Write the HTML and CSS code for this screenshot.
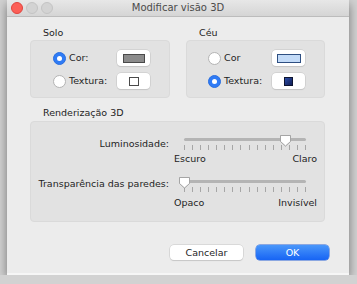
FILE: index.html
```html
<!DOCTYPE HTML>
<html>
<head>
<meta charset="utf-8">
<title>Modificar visão 3D</title>
<link rel="stylesheet" href="styles.css">
</head>
<body>
<div class="window">
  <div class="titlebar">
    <div class="lights"><span class="light close"></span><span class="light"></span><span class="light"></span></div>
    <div class="title">Modificar visão 3D</div>
    <div></div>
  </div>
  <div class="content">
    <div class="groups">
      <div class="group">
        <div class="group_tit">Solo</div>
        <div class="box choice">
          <label class="opt"><span class="radio on"></span>Cor:</label>
          <span class="swatch"><span class="chip chip_gray"></span></span>
          <label class="opt"><span class="radio"></span>Textura:</label>
          <span class="swatch"><span class="chip chip_white"></span></span>
        </div>
      </div>
      <div class="group">
        <div class="group_tit">Céu</div>
        <div class="box choice sky">
          <label class="opt"><span class="radio"></span>Cor</label>
          <span class="swatch"><span class="chip chip_blue"></span></span>
          <label class="opt"><span class="radio on"></span>Textura:</label>
          <span class="swatch"><span class="chip chip_navy"></span></span>
        </div>
      </div>
    </div>

    <div class="group render">
      <div class="group_tit">Renderização 3D</div>
      <div class="box sliders">
        <div class="s_label s_first">Luminosidade:</div>
        <div class="s_col">
          <div class="slider">
            <div class="track"></div>
            <div class="ticks"><i></i><i></i><i></i><i></i><i></i><i></i><i></i><i></i><i></i><i></i><i></i><i></i><i></i><i></i><i></i><i></i></div>
            <svg class="thumb" style="left:95px" width="13" height="13" viewBox="0 0 13 13"><path d="M1.5 1.5 H11.5 V7.5 L6.5 12 L1.5 7.5 Z" fill="#fff" stroke="#a5a5a5"/></svg>
          </div>
          <div class="ends"><span>Escuro</span><span>Claro</span></div>
        </div>
        <div class="s_label">Transparência das paredes:</div>
        <div class="s_col s_second">
          <div class="slider">
            <div class="track"></div>
            <div class="ticks"><i></i><i></i><i></i><i></i><i></i><i></i><i></i><i></i><i></i><i></i><i></i><i></i><i></i><i></i><i></i><i></i></div>
            <svg class="thumb" style="left:-6px" width="13" height="13" viewBox="0 0 13 13"><path d="M1.5 1.5 H11.5 V7.5 L6.5 12 L1.5 7.5 Z" fill="#fff" stroke="#a5a5a5"/></svg>
          </div>
          <div class="ends"><span>Opaco</span><span>Invisível</span></div>
        </div>
      </div>
    </div>

    <div class="buttons">
      <button class="btn">Cancelar</button>
      <button class="btn btn_ok">OK</button>
    </div>
  </div>
</div>
</body>
</html>
```

FILE: styles.css
```css
* { margin:0; padding:0; box-sizing:border-box;}
body{ background:#d2d2d2; font:normal 9.5px/12px "DejaVu Sans", sans-serif; color:#1e1e1e; overflow:hidden;}
.window{ width:342px; height:275px; margin-left:7px; background:#ececec; box-shadow:0 4px 10px rgba(0,0,0,.45); display:flex; flex-direction:column;}

.titlebar{ height:17px; display:grid; grid-template-columns:1fr auto 1fr; align-items:center; background:linear-gradient(#e7e7e7,#d5d5d5); border-bottom:1px solid #bcbcbc;}
.lights{ display:flex; gap:3px; padding-left:4px;}
.light{ width:12px; height:12px; border-radius:50%; background:#d3d3d3; border:1px solid #c4c4c4;}
.light.close{ background:#fc5f57; border-color:#e0443e;}
.title{ font-size:10px; color:#4b4b4b;}

.content{ flex:1; padding:10px 24px 0 23px; border-bottom:2px solid #f6f6f6;}
.groups{ display:flex; gap:16px;}
.group .group_tit{ padding-left:13px; margin-bottom:1px;}
.box{ background:#e2e2e2; border:1px solid #dadada; border-radius:4px;}

.choice{ width:140px; height:58px; display:grid; grid-template-columns:64px 33px; grid-auto-rows:16px; row-gap:7px; padding:9px 0 0 22px; align-items:center;}
.group + .group .choice{ width:139px; padding-left:21px;}
.opt{ display:flex; align-items:center; gap:3px;}
.radio{ width:13px; height:13px; border-radius:50%; background:#fff; border:1px solid #b4b4b4; display:flex; align-items:center; justify-content:center;}
.radio.on{ background:#2f7bf5; border-color:#2a6fe0;}
.radio.on::after{ content:""; width:5px; height:5px; border-radius:50%; background:#fff;}
.swatch{ height:16px; background:#fff; border-radius:4px; box-shadow:0 0 0 .5px #c3c3c3, 0 1px 1px rgba(0,0,0,.12); display:flex; align-items:center; justify-content:center;}
.chip{ display:block; height:9px; border:1px solid #4a4a4a;}
.chip_gray{ width:22px; background:#8b8b8b;}
.chip_white{ width:10px; background:#fff;}
.chip_blue{ width:24px; background:#c3dbf8; border-color:#2e4f82;}
.chip_navy{ width:9px; background:linear-gradient(135deg,#2d4ea8,#101d55); border-color:#0d1430;}

.render{ margin-top:9px;}
.render .group_tit{ margin-bottom:2px;}
.sliders{ height:101px; display:grid; grid-template-columns:138px 143px; column-gap:5px; row-gap:11px; padding-top:12px; align-content:start;}
.s_label{ text-align:right; margin-top:2px;}
.s_first{ margin-top:4px;}
.slider{ position:relative; height:19px; margin:0 11px 0 10px;}
.track{ position:absolute; left:0; right:0; top:4px; height:3px; border-radius:2px; background:#b4b4b4;}
.ticks{ position:absolute; left:0; right:0; top:11px; height:5px; display:flex; justify-content:space-between;}
.ticks i{ width:1px; background:#a6a6a6;}
.thumb{ position:absolute; top:0; filter:drop-shadow(0 .5px .5px rgba(0,0,0,.2));}
.ends{ display:flex; justify-content:space-between;}
.s_second .ends{ margin-top:2px;}

.buttons{ display:flex; justify-content:flex-end; gap:13px; margin-top:23px; padding-right:-4px; margin-right:-4px;}
.btn{ width:73px; height:15px; border:none; border-radius:4px; background:#fff; font:normal 9.5px/15px "DejaVu Sans", sans-serif; color:#1e1e1e; box-shadow:0 0 0 .5px #c6c6c6, 0 1px 1px rgba(0,0,0,.15);}
.btn_ok{ background:linear-gradient(#4a97fa,#1764f4); color:#fff; box-shadow:0 0 0 .5px #2a63d6;}
```
